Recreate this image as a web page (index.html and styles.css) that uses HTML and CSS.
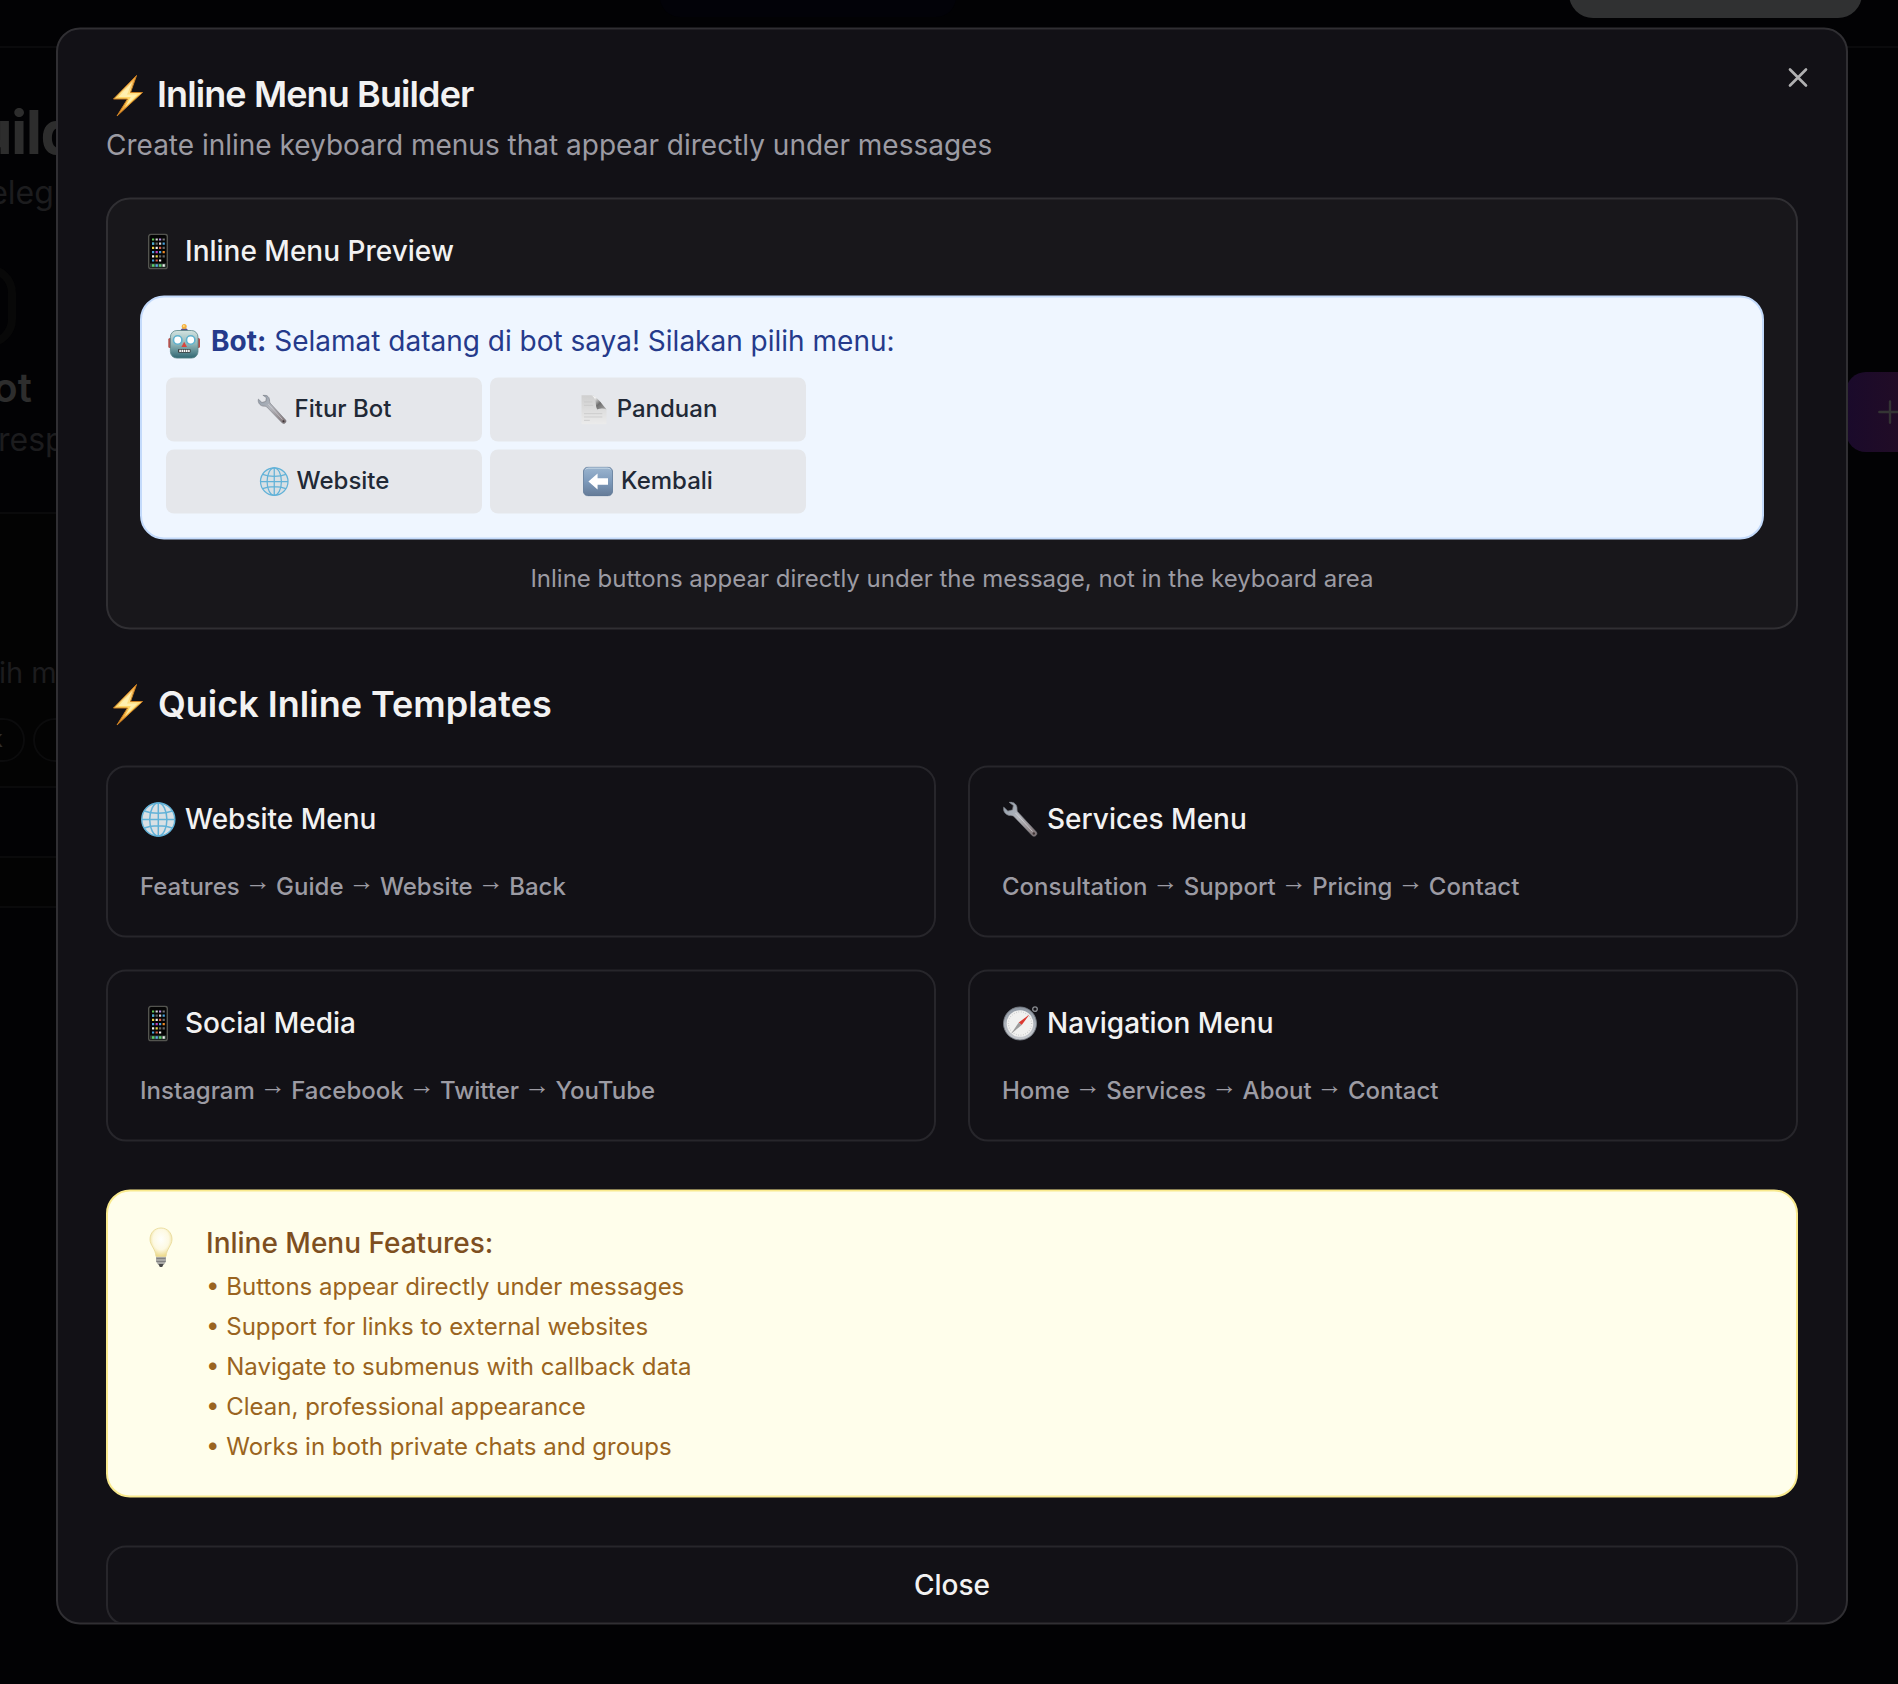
FILE: index.html
```html
<!DOCTYPE html>
<html lang="en">
<head>
<meta charset="utf-8">
<title>Inline Menu Builder</title>
<link rel="stylesheet" href="styles.css">
</head>
<body>
<svg class="defs" aria-hidden="true">
  <defs>
    <linearGradient id="g-bolt" x1="0" y1="0" x2="0" y2="1"><stop offset="0" stop-color="#f09a2c"/><stop offset=".4" stop-color="#ffe28a"/><stop offset=".6" stop-color="#ffd35c"/><stop offset="1" stop-color="#e8861c"/></linearGradient>
    <linearGradient id="g-wrench" x1="0" y1="0" x2="1" y2="1"><stop offset="0" stop-color="#8e9cab"/><stop offset=".45" stop-color="#b4b6bc"/><stop offset="1" stop-color="#7d6f70"/></linearGradient>
    <linearGradient id="g-robot" x1="0" y1="0" x2="0" y2="1"><stop offset="0" stop-color="#d3e3e0"/><stop offset=".5" stop-color="#8fb5b7"/><stop offset="1" stop-color="#2f6672"/></linearGradient>
    <linearGradient id="g-arrow" x1="0" y1="0" x2="0" y2="1"><stop offset="0" stop-color="#9bb5cf"/><stop offset=".5" stop-color="#7d9abb"/><stop offset="1" stop-color="#647a96"/></linearGradient>
    <linearGradient id="g-page" x1="0" y1="0" x2="0" y2="1"><stop offset="0" stop-color="#cfcfcf"/><stop offset="1" stop-color="#ececec"/></linearGradient>
    <linearGradient id="g-fold" x1="0" y1="0" x2="1" y2="1"><stop offset=".2" stop-color="#f4f4f4"/><stop offset=".55" stop-color="#6e6e6e"/><stop offset="1" stop-color="#a8a8a8"/></linearGradient>
    <linearGradient id="g-rim" x1="0" y1="0" x2="0" y2="1"><stop offset="0" stop-color="#8f98a3"/><stop offset="1" stop-color="#c9ccd1"/></linearGradient>
    <radialGradient id="g-bulb" cx=".5" cy=".4" r=".6"><stop offset="0" stop-color="#fffffb"/><stop offset=".6" stop-color="#fdf9e2"/><stop offset="1" stop-color="#ecd98a"/></radialGradient>
    <symbol id="bolt" viewBox="0 0 36 44">
      <path d="M26.500 2 3.500 25.500h14L7 42.500 32.500 19H20.500z" fill="url(#g-bolt)" stroke="#c97f24" stroke-width="1"/>
      <path d="M22.500 8 8.500 23.500h12.300l-6 10.500L27.500 21H17z" fill="#fff3b8" opacity=".85"/>
    </symbol>
    <symbol id="phone" viewBox="0 0 36 36">
      <rect x="8.700" y=".7" width="18.600" height="34.600" rx="2.400" fill="#050505" stroke="#53544f" stroke-width="1.400"/>
      <g fill="none" stroke-width="2.200">
        <path d="M12 6h2.200M12 10.200h2.200" stroke="#62c554"/><path d="M15.600 6h2.200M19 10.200h2.200" stroke="#d8d8d8"/><path d="M19 6h2.200" stroke="#b48be0"/><path d="M22.600 6h2.200" stroke="#777"/>
        <path d="M12 10.200h2.200M22.600 10.200h2.200M12 18.600h2.200M19 18.600h2.200M12 27h2.200" stroke="#4aa3df"/>
        <path d="M12 14.400h2.200M15.600 22.800h2.200" stroke="#e8d34a"/><path d="M15.600 14.400h2.200M12 22.800h2.200M19 27h2.200" stroke="#eee"/><path d="M19 14.400h2.200M15.600 27h2.200" stroke="#d9604c"/>
        <path d="M15.600 18.600h2.200" stroke="#c040c0"/><path d="M22.600 18.600h2.200" stroke="#f08a24"/><path d="M22.600 14.400h2.200M15.600 10.200h2.200M19 22.800h2.200M22.600 22.800h2.200" stroke="#666"/>
      </g>
      <path d="M10 30h16v4H10z" fill="#33433a"/>
      <path d="M12 32h2.400M19 32h2.400" stroke="#59d06a" stroke-width="2.400"/><path d="M15.600 32h2.200" stroke="#5aa9e8" stroke-width="2.400"/><path d="M22.600 32h2.200" stroke="#eee" stroke-width="2.400"/>
    </symbol>
    <symbol id="robot" viewBox="0 0 36 36">
      <rect x="2.300" y="14.500" width="4" height="10" rx="1.600" fill="#b8504c"/><rect x="30" y="14.500" width="4" height="10" rx="1.600" fill="#b8504c"/>
      <path d="M14.500 7.500c0-4 7.500-4 7.500 0z" fill="#59508c"/><circle cx="18.200" cy="3" r="2.500" fill="#f5b040"/><circle cx="17.800" cy="2.400" r="1" fill="#ffe08a"/>
      <rect x="4.400" y="7" width="27.600" height="27.600" rx="6.500" fill="url(#g-robot)" stroke="#5b8588" stroke-width=".8"/>
      <circle cx="11.700" cy="16.500" r="4.200" fill="#fff" stroke="#5fb2cf" stroke-width="1.600"/><circle cx="24.700" cy="16.500" r="4.200" fill="#fff" stroke="#5fb2cf" stroke-width="1.600"/>
      <path d="m18.200 18.300 2.800 5.200h-5.600z" fill="#d8453f"/>
      <rect x="12" y="25.600" width="12.600" height="3.600" rx="1" fill="#3b3f40"/><path d="M13.300 27.400h10.400" stroke="#fff" stroke-width="2.200" stroke-dasharray="1.600 .6"/>
    </symbol>
    <symbol id="wrench" viewBox="0 0 36 36">
      <path d="M7 .7c3.500-.8 7.500 1.400 8 5.300.2 1.800-.1 3 .6 4.200L34.400 30.600c1.700 2.200-1.400 5.400-4 3.700L11.600 14.800c-1.300-1-2.800-.5-4.600-.9C3 13 .8 9.300 1.700 5.600l4.200 4 4.600-1.300.8-4.400z" fill="url(#g-wrench)" stroke="#76777d" stroke-width=".7"/>
      <path d="m13.500 11.500 17 18.500" stroke="#d6d6da" stroke-width="1" fill="none" opacity=".7"/><circle cx="31.800" cy="32" r="1.200" fill="#3c3436"/>
    </symbol>
    <symbol id="globe" viewBox="0 0 36 36">
      <circle cx="18.300" cy="18" r="16.600" fill="#d9e0e4"/>
      <g fill="none" stroke="#62b2d8" stroke-width="1.500"><circle cx="18.300" cy="18" r="16.500"/><ellipse cx="18.300" cy="18" rx="8.600" ry="16.500"/><path d="M18.300 1.500v33M1.800 18h33M4.300 9.500c8 3 20 3 28 0M4.300 26.500c8-3 20-3 28 0"/></g>
    </symbol>
    <symbol id="page" viewBox="0 0 36 36">
      <path d="M3 1h13c5 1.500 5.500 6 5.500 12 5-.5 10 .5 11.500 5v18H3z" fill="url(#g-page)"/>
      <path d="M15 1c7 2 10.500 8 18 17-3-2-8-1-11 0C19 14 22 5 15 1z" fill="url(#g-fold)"/>
      <path d="M6 9h10M6 13h11M6 23h22M6 27h22M6 31h7" stroke="#c9c9c9" stroke-width="1"/>
    </symbol>
    <symbol id="left" viewBox="0 0 36 36">
      <rect x=".5" y=".5" width="35" height="35" rx="6" fill="url(#g-arrow)" stroke="#5d7796"/>
      <path d="M3 3.500Q4 2 7 2h22q3 0 4 1.500" stroke="#cfdeeb" fill="none"/>
      <path d="M6.500 18 17.500 8.500v5.700H30v7.600H17.500v5.700z" fill="#fff"/>
    </symbol>
    <symbol id="compass" viewBox="0 0 36 36">
      <circle cx="33" cy="3.600" r="2.300" fill="none" stroke="#8a8d92" stroke-width="1.300"/>
      <circle cx="18" cy="18" r="16.500" fill="url(#g-rim)" stroke="#777d85" stroke-width=".9"/><circle cx="18" cy="18" r="13.300" fill="#f1f1f0"/>
      <circle cx="18" cy="18" r="11.600" fill="none" stroke="#c4c4c4" stroke-width="1.300" stroke-dasharray=".6 1.800"/>
      <path d="m27.500 9-7.800 10.500-3-2.600z" fill="#dc3b33"/><path d="m9 28.500 7.700-11.600 3 2.600z" fill="#9c9c9c"/>
    </symbol>
    <symbol id="bulb" viewBox="0 0 26 42">
      <path d="M8 29h10v6l-2 3h-6l-2-3z" fill="#a9a9a6"/><path d="M8.500 32h9M8.500 35h9" stroke="#777" stroke-width=".8"/><path d="M10.300 37.500h5.400l-1.500 3h-2.400z" fill="#4a4a4a"/>
      <path d="M13 1.500c6.500 0 11 5 11 11.300C24 19 18.500 22 18 30H8C7.500 22 2 19 2 12.800 2 6.500 6.500 1.500 13 1.500z" fill="url(#g-bulb)" stroke="#eadb9c" stroke-width=".9"/>
    </symbol>
  </defs>
</svg>

<div class="page">
  <header class="topbar"><span class="tab"></span><span class="top-button"></span></header>
  <div class="columns">
    <main class="peek">
      <section class="intro">
        <h1 class="page-title">Builder</h1>
        <p class="page-sub">Telegram</p>
        <div class="avatar"></div>
        <h2 class="bot-title">Bot</h2>
        <p class="bot-sub">responses</p>
      </section>
      <section class="message">
        <p class="message-text">ih menu:</p>
        <div class="chips"><span class="chip chip-cut">k</span><span class="chip"></span></div>
      </section>
      <section class="row"></section>
    </main>
    <button class="add"><svg viewBox="0 0 24 24" class="plus"><path d="M4 12h16M12 4v16"/></svg></button>
  </div>
</div>

<div class="dialog">
  <button class="dismiss" aria-label="Close"><svg viewBox="0 0 24 24"><path d="M18 6 6 18M6 6l12 12"/></svg></button>
  <header class="dialog-head">
    <h2 class="dialog-title"><svg class="bolt"><use href="#bolt"/></svg><span>Inline Menu Builder</span></h2>
    <p class="dialog-sub">Create inline keyboard menus that appear directly under messages</p>
  </header>

  <section class="preview">
    <h3 class="item-title"><svg class="emoji"><use href="#phone"/></svg><span>Inline Menu Preview</span></h3>
    <div class="bubble">
      <p class="bubble-text"><svg class="emoji"><use href="#robot"/></svg><span><strong>Bot:</strong> Selamat datang di bot saya! Silakan pilih menu:</span></p>
      <div class="keys">
        <div class="key"><svg class="emoji-sm"><use href="#wrench"/></svg><span>Fitur Bot</span></div>
        <div class="key"><svg class="emoji-sm"><use href="#page"/></svg><span>Panduan</span></div>
        <div class="key"><svg class="emoji-sm"><use href="#globe"/></svg><span>Website</span></div>
        <div class="key"><svg class="emoji-sm"><use href="#left"/></svg><span>Kembali</span></div>
      </div>
    </div>
    <p class="hint">Inline buttons appear directly under the message, not in the keyboard area</p>
  </section>

  <h3 class="section-title"><svg class="bolt"><use href="#bolt"/></svg><span>Quick Inline Templates</span></h3>
  <div class="templates">
    <div class="card"><h4 class="item-title"><svg class="emoji"><use href="#globe"/></svg><span>Website Menu</span></h4><p class="flow">Features <i>→</i> Guide <i>→</i> Website <i>→</i> Back</p></div>
    <div class="card"><h4 class="item-title"><svg class="emoji"><use href="#wrench"/></svg><span>Services Menu</span></h4><p class="flow">Consultation <i>→</i> Support <i>→</i> Pricing <i>→</i> Contact</p></div>
    <div class="card"><h4 class="item-title"><svg class="emoji"><use href="#phone"/></svg><span>Social Media</span></h4><p class="flow">Instagram <i>→</i> Facebook <i>→</i> Twitter <i>→</i> YouTube</p></div>
    <div class="card"><h4 class="item-title"><svg class="emoji"><use href="#compass"/></svg><span>Navigation Menu</span></h4><p class="flow">Home <i>→</i> Services <i>→</i> About <i>→</i> Contact</p></div>
  </div>

  <section class="features">
    <svg class="bulb"><use href="#bulb"/></svg>
    <div>
      <h4 class="features-title">Inline Menu Features:</h4>
      <ul class="features-list">
        <li>• Buttons appear directly under messages</li>
        <li>• Support for links to external websites</li>
        <li>• Navigate to submenus with callback data</li>
        <li>• Clean, professional appearance</li>
        <li>• Works in both private chats and groups</li>
      </ul>
    </div>
  </section>

  <button class="close">Close</button>
</div>
</body>
</html>
```
FILE: styles.css
```css
* { box-sizing: border-box; }
html, body { height: 100%; overflow: hidden; }
body { margin: 0; background: #020204; color: #f2f2f2; font-family: Inter, "Liberation Sans", sans-serif; -webkit-font-smoothing: antialiased; }
h1, h2, h3, h4, p, ul { margin: 0; padding: 0; font-weight: inherit; }
ul { list-style: none; }
button { font: inherit; color: inherit; padding: 0; border: 0; }
svg { display: block; flex: none; }
.defs { position: absolute; width: 0; height: 0; }

/* dimmed page behind the dialog */
.page { height: 1684px; overflow: hidden; }
.topbar { height: 48px; border-bottom: 2px solid #0a0a0c; display: flex; align-items: flex-start; }
.tab { width: 296px; height: 60px; margin: -43px 0 0 660px; background: #020208; border-radius: 20px; }
.top-button { width: 293px; height: 80px; margin: -62px 0 0 613px; background: #303132; border-radius: 24px; }
.columns { display: flex; justify-content: space-between; align-items: flex-start; }
.peek { width: 56px; overflow: hidden; white-space: nowrap; }
.intro { height: 464px; padding-top: 48px; }
.page-title { margin-left: -63px; font-size: 60px; line-height: 72px; font-weight: 700; letter-spacing: -1.5px; color: #2d2d2d; }
.page-sub { margin-left: -29px; padding-top: 1px; font-size: 32px; line-height: 48px; color: #1c1c1e; }
.avatar { width: 80px; height: 82px; margin: 48px 0 0 -64px; border: 8px solid #080808; border-radius: 28px; }
.bot-title { margin: 13px 0 0 -33px; font-size: 40px; line-height: 56px; font-weight: 600; color: #2d2d2d; }
.bot-sub { margin-left: -2px; font-size: 32px; line-height: 48px; color: #1c1c1e; }
.message { height: 276px; padding-top: 139px; border: solid #0a0a0b; border-width: 2px 0; background: #030303; }
.message-text { margin-left: -1px; font-size: 29px; line-height: 40px; color: #1c1c1e; }
.chips { display: flex; gap: 8px; margin-top: 25px; }
.chip { flex: none; width: 100px; height: 44px; border: 2px solid #0b0b0c; border-radius: 22px; font-size: 24px; line-height: 38px; font-weight: 600; color: #2d2d2d; }
.chip-cut { width: 125px; margin-left: -100px; padding-left: 87px; }
.row { height: 52px; margin-top: 68px; border: solid #0a0a0b; border-width: 2px 0; background: #030303; }
.add { width: 52px; height: 80px; margin-top: 324px; padding-left: 28px; border-radius: 20px 0 0 20px; background: linear-gradient(90deg, #1a0a2b, #210c26); }
.plus { width: 32px; height: 32px; fill: none; stroke: #343434; stroke-width: 1.8; stroke-linecap: round; }

/* dialog */
.dialog { position: absolute; left: 56px; top: 28px; width: 1792px; height: 1597px; transform: translateY(-.5px); padding: 48px 48px 0; border: 2px solid #302f33; border-radius: 24px; background: #121116; overflow: hidden; }
.dismiss { position: absolute; top: 32px; right: 32px; background: none; }
.dismiss svg { width: 32px; height: 32px; fill: none; stroke: #b0b0b1; stroke-width: 2; stroke-linecap: round; }
.dialog-title { display: flex; align-items: center; height: 36px; font-size: 36px; line-height: 36px; font-weight: 600; letter-spacing: -.9px; gap: 11px; }
.dialog-title span, .section-title span { padding-bottom: 4px; }
.item-title span, .bubble-text span, .key span { padding-bottom: 2px; }
.bolt { width: 36px; height: 44px; margin-left: 4px; }
.section-title .bolt { margin: 0 2px 2px 4px; }
.dialog-sub { margin: 11px 0 33px; font-size: 28px; line-height: 40px; color: #9c9ba3; }
.preview { padding: 32px; border: 2px solid #302f33; border-radius: 24px; background: #18171b; }
.item-title { display: flex; align-items: center; gap: 9px; height: 40px; font-size: 28px; line-height: 40px; font-weight: 500; }
.emoji { width: 36px; height: 36px; }
.emoji-sm { width: 30px; height: 30px; }
.bubble { margin-top: 24px; padding: 24px; border: 2px solid #c3dafb; border-radius: 24px; background: #eff6ff; color: #253a8b; }
.bubble-text { display: flex; align-items: center; gap: 9px; height: 40px; font-size: 28px; line-height: 40px; }
.bubble-text strong { font-weight: 700; }
.keys { display: grid; grid-template-columns: 1fr 1fr; gap: 8px; width: 640px; margin-top: 16px; }
.key { display: flex; align-items: center; justify-content: center; gap: 8px; height: 64px; border-radius: 8px; background: #e5e7eb; color: #212936; font-size: 24px; line-height: 32px; font-weight: 500; }
.hint { margin: 23px 0 1px; text-align: center; font-size: 24px; line-height: 32px; color: #9c9ba3; }
.section-title { display: flex; align-items: center; gap: 10px; height: 56px; margin-top: 48px; font-size: 36px; line-height: 56px; font-weight: 600; }
.templates { display: grid; grid-template-columns: 1fr 1fr; gap: 32px; margin-top: 32px; }
.card { height: 172px; padding: 32px; border: 2px solid #27262b; border-radius: 20px; }
.flow { margin-top: 31px; font-size: 24px; line-height: 32px; font-weight: 500; color: #9c9ba3; }
.flow i { display: inline-block; height: 16px; margin: 0 -1.2px; vertical-align: 5px; font: normal 26px/16px "Liberation Sans", sans-serif; }
.features { display: flex; gap: 32px; height: 308px; margin-top: 48px; padding: 31px 32px 32px 40px; border: 2px solid #f9ea8e; border-radius: 24px; background: #fffeeb; color: #9a6420; }
.bulb { width: 26px; height: 42px; margin-top: 4px; }
.features-title { font-size: 28px; line-height: 40px; font-weight: 500; color: #7e4f1f; }
.features-list { display: grid; gap: 8px; margin-top: 8px; font-size: 24px; line-height: 32px; }
.close { display: block; width: 100%; height: 80px; margin-top: 48px; padding-bottom: 2px; border: 2px solid #27262b; border-radius: 20px; background: none; font-size: 28px; font-weight: 500; }
```
